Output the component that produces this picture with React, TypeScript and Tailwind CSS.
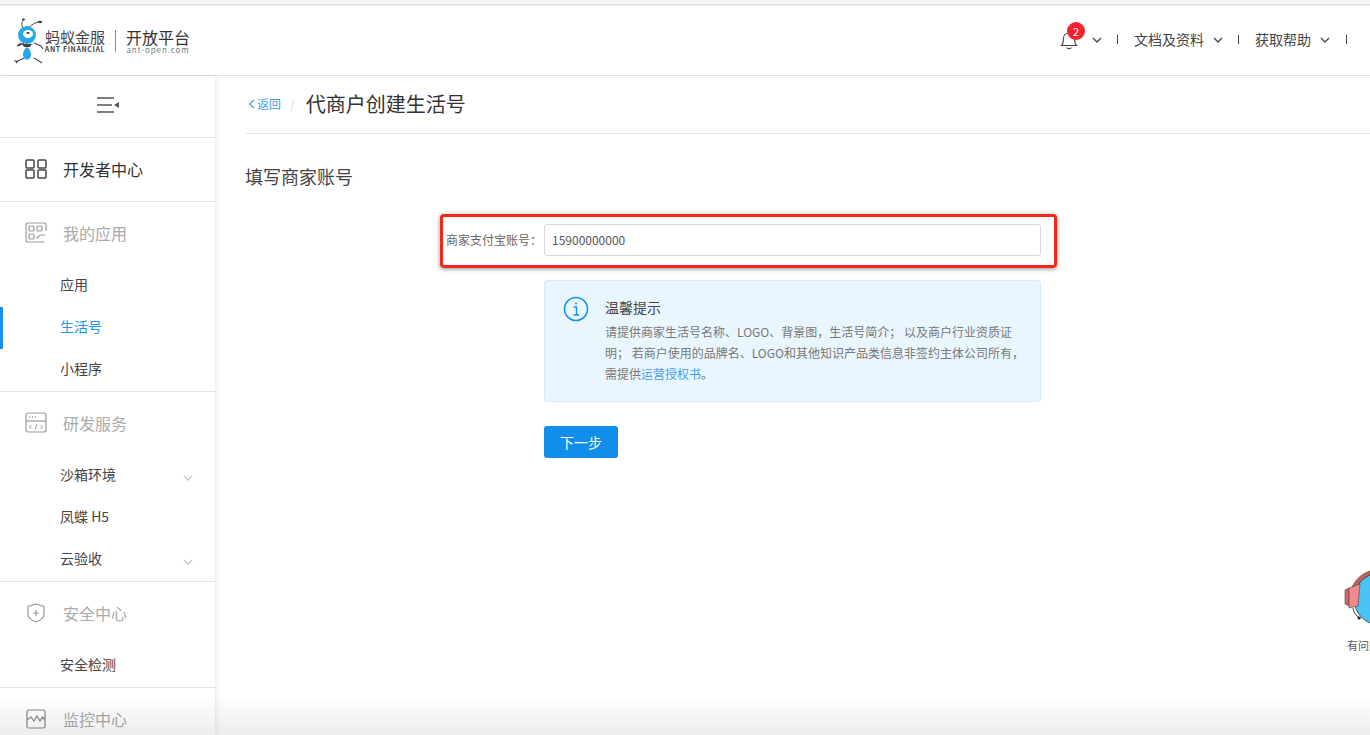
import React from 'react';

const font = { fontFamily: '"Noto Sans CJK SC", "Noto Sans", sans-serif' };

const AntLogo = () => (
    <svg width="34" height="48" viewBox="0 0 34 48" fill="none" className="shrink-0">
        <path d="M11 11 C9 8 10 5 11 3" stroke="#444" strokeWidth="1" />
        <circle cx="11.5" cy="2.5" r="1.3" fill="#444" />
        <path d="M18 10 C19 8 22 6 27 5" stroke="#444" strokeWidth="1" />
        <ellipse cx="28" cy="5" rx="2.2" ry="1.2" fill="#444" />
        <path d="M6 29 L12 26 M22 26 L29 29 L31 32 M9 26 L5 29" stroke="#444" strokeWidth="1.1" />
        <path d="M12 41 L6 44 L2 44 M22 41 L27 44 L30 46 M6 44 L4 46" stroke="#444" strokeWidth="1.1" />
        <circle cx="15" cy="18" r="9" fill="#29a8e8" />
        <ellipse cx="16" cy="17" rx="5" ry="4" fill="#ffffff" />
        <ellipse cx="16" cy="16" rx="1.7" ry="1" fill="#444" />
        <path d="M10 27 h10 l-2 3 h-6 z" fill="#444" />
        <path d="M15 30 C19 33 20 38 18 41 C17 43 13 43 12 41 C10 38 11 33 15 30 Z" fill="#29a8e8" />
    </svg>
);

const MenuToggle = () => (
    <svg width="24" height="18" viewBox="0 0 24 18" fill="none">
        <path d="M1 2 H18 M1 9 H16 M1 16 H18" stroke="#555" strokeWidth="1.6" />
        <path d="M18 9 L23 6 V12 Z" fill="#555" />
    </svg>
);

const Bell = () => (
    <svg width="18" height="20" viewBox="0 0 18 20" fill="none" stroke="#444" strokeWidth="1.1">
        <path d="M1.5 15.5 C3 14 3.4 12 3.4 9 C3.4 5.5 5.6 3 9 3 C12.4 3 14.6 5.5 14.6 9 C14.6 12 15 14 16.5 15.5 Z" />
        <path d="M6.5 17.5 C7.5 19 10.5 19 11.5 17.5" />
    </svg>
);

const Chevron = ({ className = '' }: { className?: string }) => (
    <svg width="10" height="6" viewBox="0 0 10 6" fill="none" className={className} stroke="currentColor" strokeWidth="1.3">
        <path d="M1 1 L5 5 L9 1" />
    </svg>
);

const GridIcon = () => (
    <svg width="22" height="20" viewBox="0 0 22 20" fill="none" stroke="#444" strokeWidth="1.5">
        <rect x="1" y="1" width="8" height="8" rx="1" />
        <rect x="13" y="1" width="8" height="8" rx="1" />
        <rect x="1" y="11" width="8" height="8" rx="1" />
        <rect x="13" y="11" width="8" height="8" rx="1" />
    </svg>
);

const AppIcon = () => (
    <svg width="22" height="21" viewBox="0 0 22 21" fill="none" stroke="#999" strokeWidth="1.2">
        <path d="M21 9 V2.5 A1.5 1.5 0 0 0 19.5 1 H2.5 A1.5 1.5 0 0 0 1 2.5 V18.5 A1.5 1.5 0 0 0 2.5 20 H19.5" />
        <rect x="4" y="4" width="5" height="5" rx="1" />
        <rect x="12" y="4" width="5" height="5" rx="1" />
        <rect x="4" y="12" width="5" height="5" rx="1" />
        <path d="M11 16 C13 16 14 13 16 13 H20" />
    </svg>
);

const DevIcon = () => (
    <svg width="22" height="21" viewBox="0 0 22 21" fill="none" stroke="#999" strokeWidth="1.2">
        <rect x="1" y="1" width="20" height="19" rx="2" />
        <path d="M1 9 H21" />
        <path d="M4 5 H5 M7 5 H8 M10 5 H11" strokeWidth="1.6" />
        <path d="M6.5 13 L4.5 15 L6.5 17 M15.5 13 L17.5 15 L15.5 17 M12 12.5 L10 17.5" strokeWidth="1" />
    </svg>
);

const ShieldIcon = () => (
    <svg width="18" height="20" viewBox="0 0 18 20" fill="none" stroke="#999" strokeWidth="1.2">
        <path d="M9 1 L17 3.5 V11 C17 15 13 17.5 9 19 C5 17.5 1 15 1 11 V3.5 Z" />
        <path d="M9 7 V13 M6 10 H12" />
    </svg>
);

const MonitorIcon = () => (
    <svg width="20" height="20" viewBox="0 0 20 20" fill="none" stroke="#888" strokeWidth="1.2">
        <rect x="1" y="1" width="18" height="18" rx="1.5" />
        <path d="M1 11 L5 8 L8 12 L11 7 L14 12 L16.5 8 L19 11" />
    </svg>
);

const InfoIcon = () => (
    <svg width="26" height="26" viewBox="0 0 26 26" fill="none" stroke="#1890e8" strokeWidth="1.6">
        <circle cx="13" cy="13" r="11.5" />
        <circle cx="13" cy="7.5" r="1" fill="#1890e8" stroke="none" />
        <path d="M10.5 11 H13.5 V19 M10.5 19 H16" strokeWidth="1.4" />
    </svg>
);

const BackArrow = () => (
    <svg width="7" height="10" viewBox="0 0 7 10" fill="none" stroke="#3f9fec" strokeWidth="1.2">
        <path d="M6 1 L1.5 5 L6 9" />
    </svg>
);

const Mascot = () => (
    <svg width="26" height="64" viewBox="0 0 26 64" fill="none">
        <path d="M8 20 C13 10 20 6 26 4 V10 C20 12 16 16 14 20 Z" fill="#c4605f" stroke="#444" strokeWidth="0.6" />
        <circle cx="36" cy="32" r="26" fill="#4cc3f5" stroke="#333" strokeWidth="0.8" />
        <path d="M1 23 L5 21 L5 39 L1 37 Z" fill="#d9666a" stroke="#444" strokeWidth="0.6" />
        <path d="M5 21 L16 17 L14 39 L5 41 Z" fill="#f08a8c" stroke="#444" strokeWidth="0.6" />
        <path d="M9 41 C10 47 13 50 17 51" stroke="#333" strokeWidth="1" />
        <circle cx="15" cy="51" r="1.5" fill="#222" />
    </svg>
);

const NavGroup = ({
    icon,
    title,
    items,
}: {
    icon: React.ReactNode;
    title: string;
    items: { label: string; active?: boolean; arrow?: boolean }[];
}) => (
    <div className="border-b border-[#e4e4e4] pb-[2px]">
        <div className="flex h-[61px] items-center pl-[24px]">
            <span className="flex w-[23px] justify-center">{icon}</span>
            <span className="ml-[16px] text-[16px] text-[#aaaaaa]">{title}</span>
        </div>
        {items.map((item) => (
            <div
                key={item.label}
                className={`relative flex h-[42px] items-center pl-[60px] pr-[22px] text-[14px] ${
                    item.active ? 'text-[#2196ea]' : 'text-[#444444]'
                }`}
            >
                {item.active && <span className="absolute left-0 top-[2px] h-[42px] w-[3px] bg-[#1890ee]" />}
                <span>{item.label}</span>
                {item.arrow && <Chevron className="ml-auto mt-[7px] text-[#c4c4c4]" />}
            </div>
        ))}
    </div>
);

export default function App() {
    return (
        <div className="relative flex h-[735px] w-[1370px] flex-col overflow-hidden bg-white" style={font}>
            <div className="h-[6px] shrink-0 border-b-2 border-[#e6e6e6] bg-[#f5f5f5]" />

            <header className="flex h-[70px] shrink-0 items-center border-b border-[#e2e2e2] pl-[12px] pr-[23px]">
                <AntLogo />
                <div className="ml-[-1px] flex w-[60px] flex-col items-center pt-[1px]">
                    <span className="text-[15px] leading-[15px] text-[#444444]">蚂蚁金服</span>
                    <span className="mt-[2px] whitespace-nowrap text-[7px] font-bold leading-[7px] tracking-[0.6px] text-[#444444]">ANT FINANCIAL</span>
                </div>
                <span className="mx-[10px] h-[22px] w-px bg-[#888888]" />
                <div className="flex flex-col items-center pt-[1px]">
                    <span className="text-[16px] leading-[16px] text-[#333333]">开放平台</span>
                    <span className="mt-[2px] text-[8px] leading-[6px] tracking-[0.9px] text-[#777777]">ant-open.com</span>
                </div>

                <div className="ml-auto flex items-center pb-[2px] text-[14px] text-[#444444]">
                    <span className="relative mt-[1px] flex">
                        <Bell />
                        <span className="absolute left-[7px] top-[-8px] flex h-[18px] w-[18px] items-center justify-center rounded-full bg-[#f5222d] text-[11px] leading-none text-white">
                            2
                        </span>
                    </span>
                    <Chevron className="ml-[14px] text-[#444444]" />
                    <span className="ml-[15px] h-[9px] w-px bg-[#444444]" />
                    <span className="ml-[16px]">文档及资料</span>
                    <Chevron className="ml-[9px] text-[#444444]" />
                    <span className="ml-[15px] h-[9px] w-px bg-[#444444]" />
                    <span className="ml-[16px]">获取帮助</span>
                    <Chevron className="ml-[9px] text-[#444444]" />
                    <span className="ml-[16px] h-[9px] w-px bg-[#444444]" />
                </div>
            </header>

            <div className="flex min-h-0 flex-1">
                <aside className="w-[215px] shrink-0 overflow-hidden shadow-[2px_0_5px_rgba(0,0,0,0.08)]">
                    <div className="flex h-[62px] items-center justify-center border-b border-[#e4e4e4] pb-[3px]">
                        <MenuToggle />
                    </div>
                    <div className="flex h-[64px] items-center border-b border-[#e4e4e4] pb-[2px] pl-[24px]">
                        <span className="flex w-[23px] justify-center">
                            <GridIcon />
                        </span>
                        <span className="ml-[16px] text-[16px] text-[#333333]">开发者中心</span>
                    </div>
                    <NavGroup
                        icon={<AppIcon />}
                        title="我的应用"
                        items={[{ label: '应用' }, { label: '生活号', active: true }, { label: '小程序' }]}
                    />
                    <NavGroup
                        icon={<DevIcon />}
                        title="研发服务"
                        items={[{ label: '沙箱环境', arrow: true }, { label: '凤蝶 H5' }, { label: '云验收', arrow: true }]}
                    />
                    <NavGroup icon={<ShieldIcon />} title="安全中心" items={[{ label: '安全检测' }]} />
                    <NavGroup icon={<MonitorIcon />} title="监控中心" items={[]} />
                </aside>

                <main className="min-w-0 flex-1 pl-[30px]">
                    <div className="flex h-[58px] items-center border-b border-[#e8e8e8] pb-[2px]">
                        <span className="ml-[3px] flex items-center gap-[2px] text-[12px] text-[#3f9fec]">
                            <BackArrow />
                            返回
                        </span>
                        <span className="ml-[9px] text-[12px] text-[#dddddd]">/</span>
                        <h1 className="ml-[11px] text-[20px] font-normal text-[#333333]">代商户创建生活号</h1>
                    </div>
                    <h2 className="mt-[28px] text-[18px] font-normal leading-[28px] text-[#444444]">填写商家账号</h2>

                    <div className="ml-[201px] mt-[34px] flex w-[595px] items-center">
                        <label className="w-[98px] shrink-0 whitespace-nowrap text-[12px] text-[#666666]">商家支付宝账号：</label>
                        <input
                            readOnly
                            value="15900000000"
                            className="h-[32px] w-[497px] rounded-[3px] border border-[#d9d9d9] px-[7px] pb-[1px] text-[12px] text-[#555555] outline-none"
                            style={font}
                        />
                    </div>

                    <div className="ml-[299px] mt-[24px] flex h-[122px] w-[497px] rounded-[3px] border border-[#d5eafa] bg-[#eaf6fd] pl-[18px] pt-[15px]">
                        <InfoIcon />
                        <div className="ml-[16px] w-[420px]">
                            <p className="text-[14px] leading-[22px] text-[#444444]">温馨提示</p>
                            <p className="mt-[3px] text-[12px] leading-[21px] text-[#777777]">
                                请提供商家生活号名称、LOGO、背景图，生活号简介； 以及商户行业资质证明； 若商户使用的品牌名、LOGO和其他知识产品类信息非签约主体公司所有，需提供
                                <span className="text-[#3f9fec]">运营授权书</span>。
                            </p>
                        </div>
                    </div>

                    <button className="ml-[299px] mt-[24px] flex h-[32px] w-[74px] items-center justify-center rounded-[3px] bg-[#108ee9] text-[14px] text-white">
                        下一步
                    </button>
                </main>
            </div>

            {/* red annotation drawn over the form row */}
            <div className="pointer-events-none absolute left-[440px] top-[214px] h-[54px] w-[617px] rounded-[4px] border-[3px] border-[#f5261c] shadow-[0_1px_4px_rgba(0,0,0,0.45)]" />

            {/* floating help mascot, cut by the right edge */}
            <div className="absolute right-0 top-[567px] flex w-[26px] flex-col overflow-hidden">
                <Mascot />
                <span className="ml-[3px] mt-[6px] whitespace-nowrap text-[11px] text-[#555555]">有问题</span>
            </div>

            <div className="pointer-events-none absolute inset-x-0 bottom-0 h-[40px] bg-gradient-to-b from-transparent to-[#00000012]" />
        </div>
    );
}
